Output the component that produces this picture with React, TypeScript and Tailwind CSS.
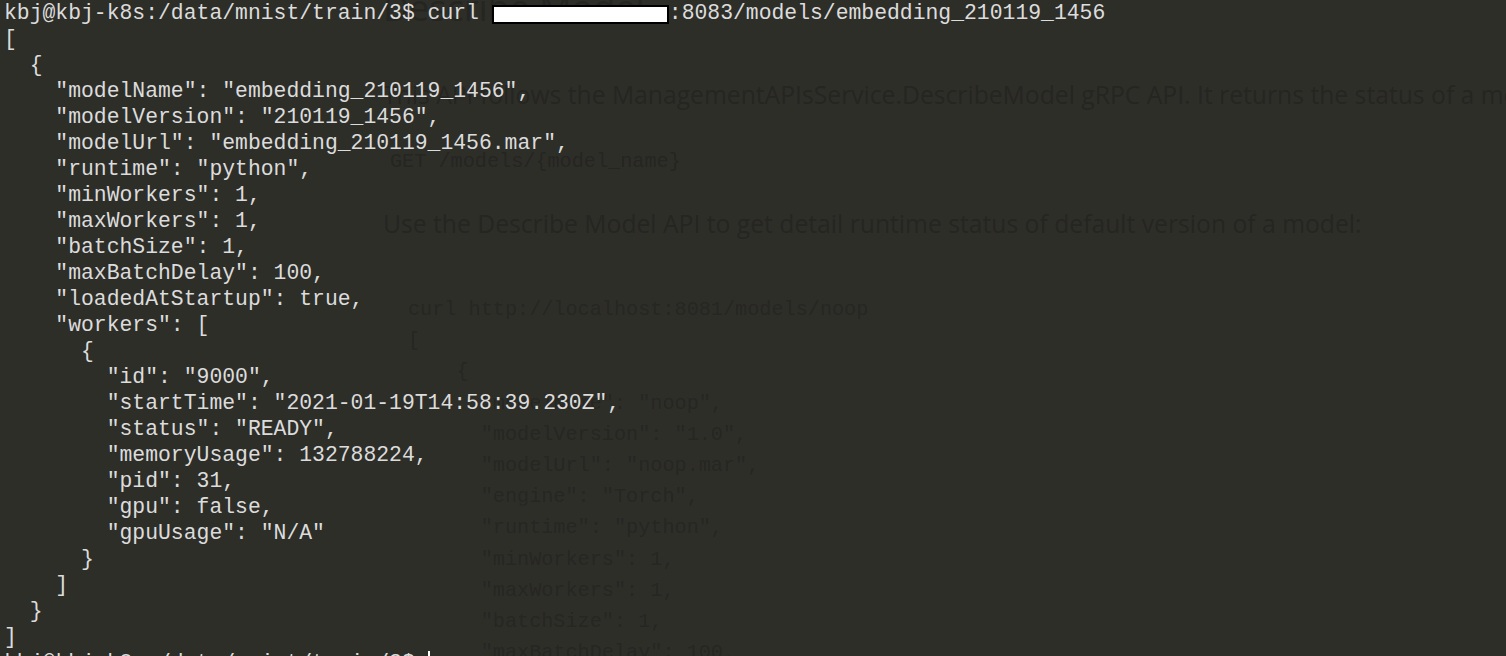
const output: string[] = [
  '[',
  '  {',
  '    "modelName": "embedding_210119_1456",',
  '    "modelVersion": "210119_1456",',
  '    "modelUrl": "embedding_210119_1456.mar",',
  '    "runtime": "python",',
  '    "minWorkers": 1,',
  '    "maxWorkers": 1,',
  '    "batchSize": 1,',
  '    "maxBatchDelay": 100,',
  '    "loadedAtStartup": true,',
  '    "workers": [',
  '      {',
  '        "id": "9000",',
  '        "startTime": "2021-01-19T14:58:39.230Z",',
  '        "status": "READY",',
  '        "memoryUsage": 132788224,',
  '        "pid": 31,',
  '        "gpu": false,',
  '        "gpuUsage": "N/A"',
  '      }',
  '    ]',
  '  }',
  ']',
]

// faint docs page showing through the translucent terminal
const docSample: string[] = [
  'curl http://localhost:8081/models/noop',
  '[',
  '    {',
  '      "modelName": "noop",',
  '      "modelVersion": "1.0",',
  '      "modelUrl": "noop.mar",',
  '      "engine": "Torch",',
  '      "runtime": "python",',
  '      "minWorkers": 1,',
  '      "maxWorkers": 1,',
  '      "batchSize": 1,',
  '      "maxBatchDelay": 100,',
]

const PROMPT = 'kbj@kbj-k8s:/data/mnist/train/3$ '

function GhostDocs() {
  return (
    <div className="absolute inset-0 overflow-hidden pl-[383px] text-[#252521]">
      <h1 className="-mt-[12px] whitespace-nowrap font-['Open_Sans',sans-serif] text-[36px] leading-[40px]">
        Describe Model
      </h1>
      <p className="mt-[51px] whitespace-nowrap font-['Open_Sans',sans-serif] text-[24.7px] leading-[32px]">
        This API follows the ManagementAPIsService.DescribeModel gRPC API. It returns the status of a model in the ModelServer.
      </p>
      <div className="ml-[7px] mt-[37px] whitespace-pre font-['Liberation_Mono',monospace] text-[20.2px] leading-[28px]">
        GET /models/{'{model_name}'}
      </div>
      <p className="mt-[32px] whitespace-nowrap font-['Open_Sans',sans-serif] text-[24.7px] leading-[32px]">
        Use the Describe Model API to get detail runtime status of default version of a model:
      </p>
      <div className="ml-[25px] mt-[54px] font-['Liberation_Mono',monospace] text-[20.2px] leading-[31.2px] text-[#262623]">
        {docSample.map((line, i) => (
          <div key={i} className="whitespace-pre">
            {line}
          </div>
        ))}
      </div>
    </div>
  )
}

export default function App() {
  return (
    <div className="relative h-[656px] w-[1506px] overflow-hidden bg-[#2e2e29]">
      <GhostDocs />

      <div className="relative pl-[4px] font-['Liberation_Mono',monospace] text-[21.4px] leading-[26px] text-[#dcdcdc]">
        {/* command line, host address blanked out */}
        <div className="flex items-start whitespace-pre">
          <span>{PROMPT}curl </span>
          <span className="mt-[5px] h-[19px] w-[177px] shrink-0 border-2 border-black bg-white" />
          <span>:8083/models/embedding_210119_1456</span>
        </div>

        {output.map((line, i) => (
          <div key={i} className="whitespace-pre">
            {line}
          </div>
        ))}

        <div className="flex items-start whitespace-pre">
          <span>{PROMPT}</span>
          <span className="mt-[1px] h-[22px] w-[2px] bg-white" />
        </div>
      </div>
    </div>
  )
}
